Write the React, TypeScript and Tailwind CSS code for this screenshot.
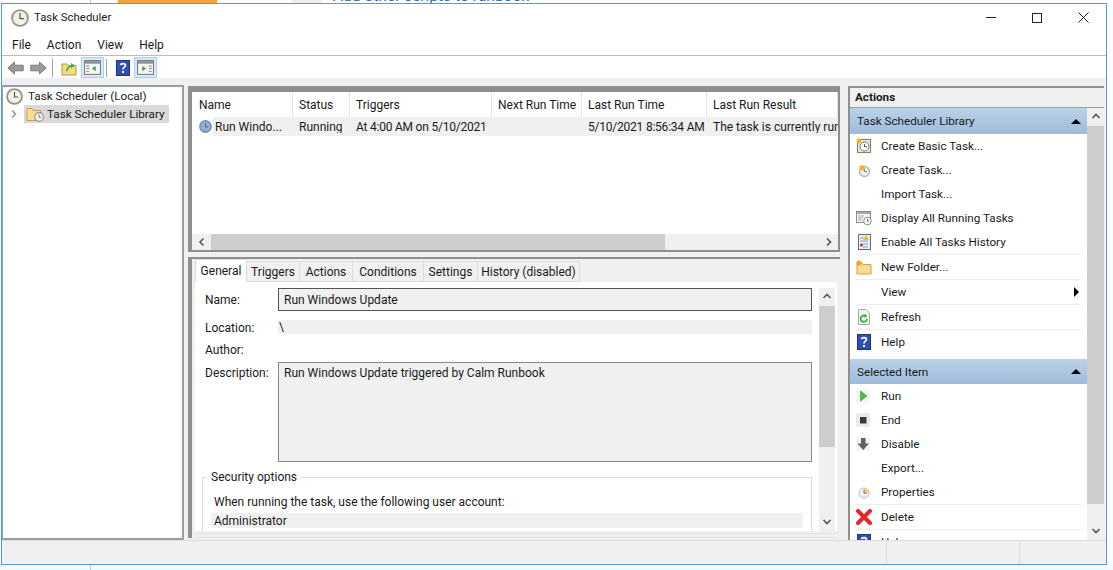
import React from 'react';

const Clock: React.FC<{ size?: number; face?: string; rim?: string }> = ({ size = 16, face = '#f4f1e6', rim = '#94948c' }) => (
    <svg width={size} height={size} viewBox="0 0 16 16" className="shrink-0">
        <circle cx="8" cy="8" r="7" fill={face} stroke={rim} strokeWidth="1.7" />
        <path d="M8 3.5V8.5H11.5" fill="none" stroke="#555" strokeWidth="1.1" />
    </svg>
);

const HelpIcon: React.FC<{ size?: number }> = ({ size = 16 }) => (
    <svg width={size} height={size} viewBox="0 0 14 16" className="shrink-0">
        <rect x="0.5" y="0.5" width="13" height="15" fill="#2f4fb3" stroke="#1f3276" />
        <path d="M4.6 5.2C4.8 3 9.4 3 9.4 5.4C9.4 7.2 7 7.2 7 9.4" fill="none" stroke="#fff" strokeWidth="1.7" />
        <rect x="6" y="11" width="2" height="2" fill="#fff" />
    </svg>
);

const Arrow: React.FC<{ flip?: boolean }> = ({ flip }) => (
    <svg width="17" height="14" viewBox="0 0 17 14" className={flip ? 'rotate-180' : ''}>
        <path d="M0.8 7L7.5 1V4.2H16.2V9.8H7.5V13Z" fill="#9a9a9a" stroke="#7c7c7c" />
    </svg>
);

const PaneIcon: React.FC<{ right?: boolean }> = ({ right }) => (
    <svg width="17" height="15" viewBox="0 0 16 14">
        <rect x="0.5" y="0.5" width="15" height="13" fill="#f6f6f6" stroke="#7d7d7d" />
        <rect x="1" y="1" width="14" height="2.4" fill="#8e8e8e" />
        <path d={right ? 'M11 5.5H14M11 8H14M11 10.5H14' : 'M2 5.5H5M2 8H5M2 10.5H5'} stroke="#8a8a8a" />
        <path d={right ? 'M5 5.5V10.5L8.5 8Z' : 'M11 5.5V10.5L7.5 8Z'} fill="#2eaa3c" />
    </svg>
);

const Folder: React.FC<{ size?: number }> = ({ size = 16 }) => (
    <svg width={size} height={size} viewBox="0 0 16 16" className="shrink-0">
        <path d="M1 2.5H6L7 4.5H15V14.5H1Z" fill="#f8dd92" stroke="#c9a44f" />
    </svg>
);

const actionIcons: Record<string, React.ReactNode> = {
    basic: (
        <svg width="16" height="16" viewBox="0 0 16 16">
            <rect x="1.5" y="1.5" width="13" height="13" fill="#ece6dc" stroke="#8c7a68" />
            <circle cx="8.5" cy="8.5" r="4.5" fill="#fff" stroke="#777" />
            <path d="M8.5 6V8.7H11" fill="none" stroke="#555" />
            <circle cx="3" cy="3" r="2.4" fill="#f6b021" />
        </svg>
    ),
    task: (
        <svg width="16" height="16" viewBox="0 0 16 16">
            <circle cx="8.5" cy="9.5" r="5" fill="#eef1f4" stroke="#aeb8c2" strokeWidth="1.4" />
            <path d="M8.5 6.5V9.7H11" fill="none" stroke="#777" />
            <path d="M3.5 3.5H8.5V8.5H5L3.5 6.5Z" fill="#f5b02c" />
        </svg>
    ),
    running: (
        <svg width="16" height="16" viewBox="0 0 16 16">
            <rect x="0.5" y="1.5" width="14" height="11" fill="#f4f4f4" stroke="#8a8a8a" />
            <rect x="1" y="2" width="13" height="2" fill="#a8a8a8" />
            <path d="M2 6H8M2 8H7M2 10H6" stroke="#aaa" />
            <circle cx="11.5" cy="11" r="3.8" fill="#fff" stroke="#888" />
            <path d="M11.5 9V11.2H13.2" fill="none" stroke="#666" />
        </svg>
    ),
    history: (
        <svg width="16" height="16" viewBox="0 0 14 16">
            <rect x="1.5" y="0.5" width="12" height="15" fill="#e9eef5" stroke="#5b6f8c" />
            <path d="M3 4H11M3 7H11M6 10H11M6 13H11" stroke="#8fa0b8" />
            <path d="M9 1L12 6H6Z" fill="#f2c331" />
            <circle cx="4.5" cy="11" r="1.5" fill="#c9302c" />
        </svg>
    ),
    folder: (
        <svg width="16" height="16" viewBox="0 0 16 16">
            <path d="M1 4H6L7 5.5H15V15H1Z" fill="#f9dd93" stroke="#c9a44f" />
            <circle cx="3" cy="4" r="2.6" fill="#f5a81c" />
        </svg>
    ),
    refresh: (
        <svg width="16" height="16" viewBox="0 0 16 16">
            <path d="M2.5 0.5H10L13.5 4V15.5H2.5Z" fill="#f4f4f4" stroke="#aaa" />
            <path d="M11 10A3.2 3.2 0 1 1 9.8 7.2" fill="none" stroke="#38b04a" strokeWidth="1.8" />
            <path d="M8.5 5L11.5 7L8.5 9Z" fill="#38b04a" />
        </svg>
    ),
    run: (
        <svg width="16" height="16" viewBox="0 0 16 16">
            <rect width="14" height="14" x="0" y="1" fill="#f5f5f5" />
            <path d="M4.5 3V13L11 8Z" fill="#4cc03f" stroke="#3a9c30" strokeWidth="0.6" />
        </svg>
    ),
    end: (
        <svg width="16" height="16" viewBox="0 0 16 16">
            <rect x="0" y="1" width="14" height="14" fill="#ebebeb" />
            <rect x="4" y="5" width="6.5" height="6.5" fill="#3a3a3a" />
        </svg>
    ),
    disable: (
        <svg width="16" height="16" viewBox="0 0 16 16">
            <rect x="0" y="1" width="14" height="14" fill="#f3f3f3" />
            <path d="M5 2H9.5V7.5H13L7.2 14L1.5 7.5H5Z" fill="#626262" />
        </svg>
    ),
    properties: (
        <svg width="16" height="16" viewBox="0 0 16 16">
            <circle cx="8" cy="9" r="5" fill="#eef0f3" stroke="#b9c1ca" />
            <path d="M8 4V9H13A5 5 0 0 0 8 4Z" fill="#f3cf82" />
            <path d="M8 6V9.2H10.5" fill="none" stroke="#777" />
        </svg>
    ),
    delete: (
        <svg width="18" height="18" viewBox="0 0 18 18" className="-ml-[1px]">
            <path d="M3 3L15 15M15 3L3 15" stroke="#e2292b" strokeWidth="4.2" strokeLinecap="round" />
        </svg>
    ),
};

const ActionRow: React.FC<{ label: string; icon?: string; help?: boolean; sep?: boolean; tall?: boolean; submenu?: boolean }> = ({ label, icon, help, sep, tall, submenu }) => (
    <div className={`mx-[5px] flex items-center pl-[1px] pr-[3px] ${tall ? 'h-[25px]' : 'h-[24px]'} ${sep ? 'border-t border-[#ececec]' : ''}`}>
        <div className="flex w-[25px] shrink-0 items-center">
            {help ? <HelpIcon size={16} /> : icon ? actionIcons[icon] : null}
        </div>
        <span className="flex-1 pt-[1px]">{label}</span>
        {submenu && <span className="h-0 w-0 border-y-[5px] border-l-[5px] border-y-transparent border-l-black" />}
    </div>
);

const ActionHeader: React.FC<{ label: string; h: string }> = ({ label, h }) => (
    <div className={`${h} flex shrink-0 items-center justify-between bg-gradient-to-b from-[#bad2e8] to-[#9fbbd9] pl-[7px] pr-[6px]`}>
        <span className="pt-[2px]">{label}</span>
        <span className="h-0 w-0 border-x-[5px] border-b-[5px] border-x-transparent border-b-black" />
    </div>
);

const ColHead: React.FC<{ w: string; label: string; pl?: string }> = ({ w, label, pl = 'pl-[6px]' }) => (
    <div className={`${w} ${pl} flex h-full shrink-0 items-center border-r border-[#e5e5e5]`}>{label}</div>
);

const Cell: React.FC<{ w: string; label?: string; pl?: string; tight?: boolean }> = ({ w, label, pl = 'pl-[6px]', tight }) => (
    <div className={`${w} ${pl} ${tight ? 'tracking-[-0.22px]' : ''} shrink-0 overflow-hidden whitespace-nowrap`}>{label}</div>
);

const Tab: React.FC<{ label: string; w: string; active?: boolean }> = ({ label, w, active }) => (
    <div className={`${w} flex items-center justify-center border border-[#dcdcdc] ${active ? 'h-[23px] border-b-0 bg-white' : 'mt-[2px] h-[21px] border-l-0 bg-[#f0f0f0]'}`}>
        {label}
    </div>
);

const Chevron: React.FC<{ dir: 'up' | 'down' | 'left' | 'right'; color?: string }> = ({ dir, color = '#555' }) => {
    const paths = { up: 'M1.5 6L5 2.5L8.5 6', down: 'M1.5 3L5 6.5L8.5 3', left: 'M6.5 1.5L3 5L6.5 8.5', right: 'M3 1.5L6.5 5L3 8.5' };
    return (
        <svg width="10" height="10" viewBox="0 0 10 10" className="shrink-0">
            <path d={paths[dir]} fill="none" stroke={color} strokeWidth="1.6" />
        </svg>
    );
};

export default function App() {
    return (
        <div className="h-[570px] w-[1113px] overflow-hidden bg-white font-['Roboto',sans-serif] text-[12px] leading-none text-[#1a1a1a]">
            <div className="flex h-[3px] overflow-hidden">
                <div className="ml-[90px] w-px bg-[#c4c4c4]" />
                <div className="ml-[27px] w-[99px] bg-[#f0a63c]" />
                <div className="ml-[75px] w-[30px] bg-[#eeeeee]" />
                <span className="ml-[11px] -mt-[11px] whitespace-nowrap text-[15.5px] text-[#2a6fb5]">Add other scripts to runbook</span>
            </div>
            <div className="ml-[1px] flex h-[562px] w-[1106px] flex-col border border-[#4a9fe0] bg-white">
                {/* title bar */}
                <div className="flex h-[27px] shrink-0 items-center pl-[9px]">
                    <Clock size={18} />
                    <span className="ml-[5px] flex-1 text-[11.4px]">Task Scheduler</span>
                    <div className="flex w-[138px] items-center">
                        <div className="flex w-[46px] justify-center"><div className="h-px w-[10px] bg-[#222]" /></div>
                        <div className="flex w-[46px] justify-center"><div className="h-[10px] w-[10px] border border-[#222]" /></div>
                        <div className="flex w-[46px] justify-center">
                            <svg width="11" height="11" viewBox="0 0 11 11"><path d="M.5.5L10.5 10.5M10.5.5L.5 10.5" stroke="#222" /></svg>
                        </div>
                    </div>
                </div>
                {/* menu */}
                <div className="flex h-[25px] shrink-0 items-center gap-[16px] border-b border-[#bdbdbd] pl-[10px] pt-[3px]">
                    <span>File</span>
                    <span>Action</span>
                    <span>View</span>
                    <span>Help</span>
                </div>
                {/* toolbar */}
                <div className="flex h-[22px] shrink-0 items-center pl-[5px] pt-[1px]">
                    <Arrow />
                    <div className="ml-[6px]"><Arrow flip /></div>
                    <div className="ml-[5px] h-[18px] w-px bg-[#a0a0a0]" />
                    <div className="ml-[8px]">
                        <svg width="16" height="16" viewBox="0 0 16 16">
                            <path d="M1 4H6L7 5.5H15V15H1Z" fill="#f6d98a" stroke="#b8963f" />
                            <path d="M5 11C5 7 8 6 10 5.5V3L14 5.5L10 8.5V7C8 7.5 7 9 6.5 11.5Z" fill="#3db53d" />
                        </svg>
                    </div>
                    <div className="ml-[4px] flex h-[21px] w-[23px] items-center justify-center border border-[#a8d3f3] bg-[#d4e9fa]"><PaneIcon /></div>
                    <div className="ml-[2px] h-[18px] w-px bg-[#a0a0a0]" />
                    <div className="ml-[8px]"><HelpIcon /></div>
                    <div className="ml-[3px] flex h-[21px] w-[23px] items-center justify-center border border-[#a8d3f3] bg-[#d4e9fa]"><PaneIcon right /></div>
                </div>
                {/* panes */}
                <div className="flex min-h-0 flex-1 bg-[#f0f0f0] pt-[7px]">
                    {/* tree */}
                    <div className="w-[182px] shrink-0 border-2 border-l border-[#96a0a9] bg-white pl-[3px] text-[11.7px]">
                        <div className="flex h-[18px] items-center pt-[1px]">
                            <Clock size={17} />
                            <span className="ml-[5px]">Task Scheduler (Local)</span>
                        </div>
                        <div className="flex h-[18px] items-center">
                            <span className="flex w-[18px] justify-start pl-[3px]"><Chevron dir="right" color="#999" /></span>
                            <div className="flex h-[18px] items-center bg-[#d9d9d9] pl-[2px] pr-[4px]">
                                <span className="relative block h-[16px] w-[18px]">
                                    <Folder />
                                    <span className="absolute bottom-0 right-0"><Clock size={10} /></span>
                                </span>
                                <span className="ml-[3px] pt-[1px]">Task Scheduler Library</span>
                            </div>
                        </div>
                    </div>
                    {/* center */}
                    <div className="ml-[4px] flex w-[654px] shrink-0 flex-col pt-[1px]">
                        <div className="flex h-[166px] w-[652px] shrink-0 flex-col border-2 border-l-4 border-t-[6px] border-[#8f8f8f] bg-white">
                            <div className="flex h-[25px] shrink-0 items-center overflow-hidden">
                                <ColHead w="w-[101px]" pl="pl-[7px]" label="Name" />
                                <ColHead w="w-[57px]" label="Status" />
                                <ColHead w="w-[142px]" label="Triggers" />
                                <ColHead w="w-[90px]" label="Next Run Time" />
                                <ColHead w="w-[125px]" label="Last Run Time" />
                                <ColHead w="w-[131px]" label="Last Run Result" />
                            </div>
                            <div className="flex h-[19px] shrink-0 items-center overflow-hidden">
                                <div className="flex w-[21px] shrink-0 justify-end pr-[1px]"><Clock size={13} face="#8fb2d6" rim="#6f8fae" /></div>
                                <div className="flex h-full flex-1 items-center overflow-hidden bg-[#f0f0f0]">
                                    <Cell w="w-[80px]" pl="pl-[2px]" label="Run Windo..." />
                                    <Cell w="w-[57px]" label="Running" />
                                    <Cell w="w-[142px]" tight label="At 4:00 AM on 5/10/2021" />
                                    <Cell w="w-[90px]" />
                                    <Cell w="w-[125px]" tight label="5/10/2021 8:56:34 AM" />
                                    <Cell w="w-[131px]" label="The task is currently running" />
                                </div>
                            </div>
                            <div className="flex-1" />
                            <div className="flex h-[16px] shrink-0 items-center bg-[#f0f0f0]">
                                <span className="flex w-[19px] justify-center"><Chevron dir="left" /></span>
                                <div className="h-full w-[454px] bg-[#cdcdcd]" />
                                <div className="flex-1" />
                                <span className="flex w-[18px] justify-center"><Chevron dir="right" /></span>
                            </div>
                        </div>
                        <div className="mb-[2px] mt-[5px] flex min-h-0 w-[652px] flex-1 flex-col border-l-4 border-t-2 border-[#8f8f8f] pl-[3px] pr-[3px]">
                            <div className="flex shrink-0">
                                <Tab label="General" w="w-[52px]" active />
                                <Tab label="Triggers" w="w-[53px]" />
                                <Tab label="Actions" w="w-[53px]" />
                                <Tab label="Conditions" w="w-[71px]" />
                                <Tab label="Settings" w="w-[54px]" />
                                <Tab label="History (disabled)" w="w-[102px]" />
                            </div>
                            <div className="flex min-h-0 flex-1 overflow-hidden bg-white pl-[10px] pt-[6px]">
                                <div className="w-[614px] shrink-0">
                                    <div className="flex h-[23px] items-center">
                                        <span className="w-[73px] shrink-0">Name:</span>
                                        <div className="flex h-[23px] w-[534px] items-center border border-[#555] bg-[#f0f0f0] pl-[5px]">Run Windows Update</div>
                                    </div>
                                    <div className="mt-[9px] flex h-[14px] items-center">
                                        <span className="w-[73px] shrink-0 pt-[1px]">Location:</span>
                                        <div className="flex h-[14px] w-[534px] items-center bg-[#f0f0f0] pl-[1px]">\</div>
                                    </div>
                                    <div className="mt-[8px] flex h-[14px] items-center">
                                        <span className="w-[73px] shrink-0 pt-[1px]">Author:</span>
                                    </div>
                                    <div className="mt-[6px] flex h-[100px]">
                                        <span className="w-[73px] shrink-0 pt-[5px]">Description:</span>
                                        <div className="h-[100px] w-[534px] border border-[#888] bg-[#f0f0f0] pl-[5px] pt-[4px]">Run Windows Update triggered by Calm Runbook</div>
                                    </div>
                                    <div className="ml-[-3px] mt-[15px] h-[54px] w-[610px] border border-b-0 border-[#dcdcdc] pl-[8px]">
                                        <div className="ml-[-4px] mt-[-7px] w-fit bg-white px-[4px]">Security options</div>
                                        <div className="mt-[13px] pl-[3px]">When running the task, use the following user account:</div>
                                        <div className="mt-[5px] flex h-[15px] w-[592px] items-center bg-[#f0f0f0] pl-[3px]">Administrator</div>
                                    </div>
                                </div>
                                <div className="flex w-[16px] shrink-0 flex-col items-center bg-[#f0f0f0]">
                                    <div className="flex h-[18px] shrink-0 items-center"><Chevron dir="up" /></div>
                                    <div className="w-full flex-1"><div className="h-[141px] bg-[#cdcdcd]" /></div>
                                    <div className="flex h-[18px] shrink-0 items-center"><Chevron dir="down" /></div>
                                </div>
                            </div>
                            <div className="mt-[2px] h-[5px] shrink-0 border-y border-[#e2e2e2]" />
                        </div>
                    </div>
                    {/* actions */}
                    <div className="ml-[6px] mt-[1px] flex w-[256px] shrink-0 flex-col overflow-hidden border-l-2 border-t-2 border-[#8f8f8f] bg-white text-[11.7px]">
                        <div className="flex h-[20px] shrink-0 items-center border-b border-[#a0a0a0] bg-[#f0f0f0] pl-[5px] pt-[1px] font-bold">Actions</div>
                        <div className="flex min-h-0 flex-1">
                            <div className="w-[237px] shrink-0 overflow-hidden">
                                <ActionHeader label="Task Scheduler Library" h="h-[26px]" />
                                <ActionRow label="Create Basic Task..." icon="basic" />
                                <ActionRow label="Create Task..." icon="task" />
                                <ActionRow label="Import Task..." />
                                <ActionRow label="Display All Running Tasks" icon="running" />
                                <ActionRow label="Enable All Tasks History" icon="history" />
                                <ActionRow label="New Folder..." icon="folder" sep tall />
                                <ActionRow label="View" sep tall submenu />
                                <ActionRow label="Refresh" icon="refresh" sep tall />
                                <ActionRow label="Help" help sep tall />
                                <div className="h-[5px]" />
                                <ActionHeader label="Selected Item" h="h-[25px]" />
                                <ActionRow label="Run" icon="run" />
                                <ActionRow label="End" icon="end" />
                                <ActionRow label="Disable" icon="disable" />
                                <ActionRow label="Export..." />
                                <ActionRow label="Properties" icon="properties" />
                                <ActionRow label="Delete" icon="delete" sep tall />
                                <ActionRow label="Help" help sep tall />
                            </div>
                            <div className="flex w-[17px] shrink-0 flex-col items-center bg-[#f0f0f0]">
                                <div className="flex h-[18px] shrink-0 items-center"><Chevron dir="up" /></div>
                                <div className="w-full flex-1"><div className="h-[378px] bg-[#cdcdcd]" /></div>
                                <div className="flex h-[18px] shrink-0 items-center"><Chevron dir="down" /></div>
                            </div>
                        </div>
                    </div>
                </div>
                {/* status bar */}
                <div className="flex h-[24px] shrink-0 justify-end border-t border-[#dcdcdc] bg-[#f0f0f0]">
                    <div className="w-[133px] border-l border-[#dcdcdc]" />
                    <div className="w-[87px] border-l border-[#dcdcdc]" />
                </div>
            </div>
            <div className="h-[5px] bg-[#f8f8f8] pl-[90px]">
                <div className="h-full w-px bg-[#c4c4c4]" />
            </div>
        </div>
    );
}
